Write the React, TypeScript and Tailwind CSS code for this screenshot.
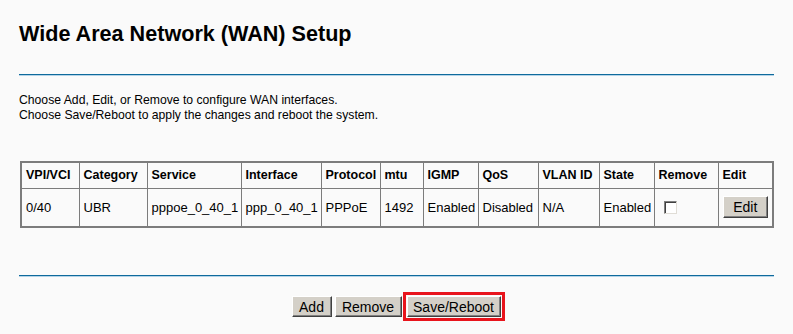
import React from 'react';

const columns = [
  { label: 'VPI/VCI', w: 'w-[58px]' },
  { label: 'Category', w: 'w-[68px]' },
  { label: 'Service', w: 'w-[94px]' },
  { label: 'Interface', w: 'w-[80px]' },
  { label: 'Protocol', w: 'w-[59px]' },
  { label: 'mtu', w: 'w-[43px]' },
  { label: 'IGMP', w: 'w-[55px]' },
  { label: 'QoS', w: 'w-[60px]' },
  { label: 'VLAN ID', w: 'w-[61px]' },
  { label: 'State', w: 'w-[55px]' },
  { label: 'Remove', w: 'w-[64px]' },
  { label: 'Edit', w: 'w-[55px]' },
];

const row = ['0/40', 'UBR', 'pppoe_0_40_1', 'ppp_0_40_1', 'PPPoE', '1492', 'Enabled', 'Disabled', 'N/A', 'Enabled'];

const btn =
  'h-[21px] bg-[#d4d0c8] text-[14px] text-black leading-none border-t border-l border-t-white border-l-white border-r border-b border-r-[#404040] border-b-[#404040] shadow-[inset_-1px_-1px_0_#808080]';

const Divider = () => (
  <div className="h-[2px] border-t border-b border-t-[#0f6a9c] border-b-[#b4d3e7]" />
);

export default function App() {
  return (
    <div className="min-h-screen bg-[#fafafa] px-[19px] text-black font-['Liberation_Sans',Arial,sans-serif]">
      <h1 className="pt-[22px] text-[21.6px] font-bold leading-[24px]">Wide Area Network (WAN) Setup</h1>

      <div className="mt-[28px]">
        <Divider />
      </div>

      <div className="mt-[17px] text-[12.2px] leading-[15px]">
        <p>Choose Add, Edit, or Remove to configure WAN interfaces.</p>
        <p>Choose Save/Reboot to apply the changes and reboot the system.</p>
      </div>

      {/* WAN interfaces table */}
      <table className="mt-[38px] ml-[1px] w-[754px] table-fixed border-collapse border-2 border-[#7c7c7c] text-[13px]">
        <thead>
          <tr className="h-[26px]">
            {columns.map((c) => (
              <th
                key={c.label}
                className={`${c.w} border border-[#7c7c7c] pl-[4px] pr-[1px] text-left text-[12.5px] font-bold whitespace-nowrap overflow-hidden`}
              >
                {c.label}
              </th>
            ))}
          </tr>
        </thead>
        <tbody>
          <tr className="h-[39px]">
            {row.map((v, i) => (
              <td key={i} className="border border-[#7c7c7c] pl-[4px] pr-[1px] whitespace-nowrap overflow-hidden">
                {v}
              </td>
            ))}
            <td className="border border-[#7c7c7c] pl-[4px]">
              <span className="ml-[5px] block h-[13px] w-[13px] border border-t-[#808080] border-l-[#808080] border-r-[#e0ddd6] border-b-[#e0ddd6] bg-white shadow-[inset_1px_1px_0_#404040]" />
            </td>
            <td className="border border-[#7c7c7c] text-center">
              <button className={`${btn} w-[45px] h-[22px]`}>Edit</button>
            </td>
          </tr>
        </tbody>
      </table>

      <div className="mt-[47px]">
        <Divider />
      </div>

      <div className="mt-[15px] flex items-center justify-center pl-[3px]">
        <button className={`${btn} w-[40px]`}>Add</button>
        <button className={`${btn} ml-[3px] w-[67px]`}>Remove</button>
        <div className="ml-[1px] border-[3px] border-[#e8141c] p-[1px]">
          <button className={`${btn} block w-[94px] h-[20px]`}>Save/Reboot</button>
        </div>
      </div>
    </div>
  );
}
